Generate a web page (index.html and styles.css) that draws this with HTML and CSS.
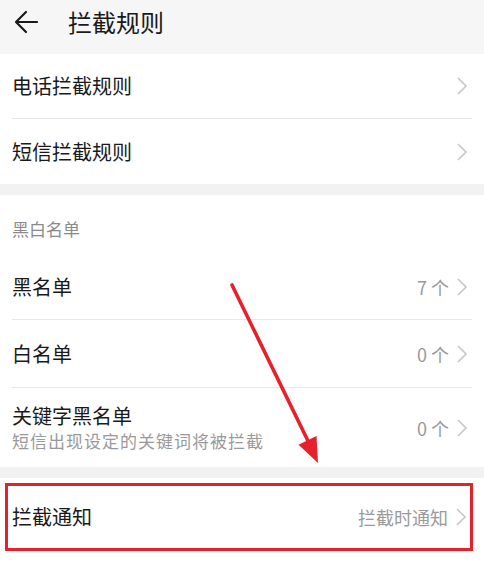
FILE: index.html
```html
<!DOCTYPE html>
<html lang="zh-CN">
<head>
  <meta charset="UTF-8">
  <title>拦截规则</title>
  <link rel="stylesheet" href="styles.css">
</head>
<body>
  <div class="page">
    <!-- Top bar -->
    <div class="topbar">
      <svg class="back" width="26" height="26" viewBox="0 0 26 26">
        <path d="M24 13H3M13 3L3 13l10 10" fill="none" stroke="#1a1a1a" stroke-width="2.2" stroke-linecap="round" stroke-linejoin="round"/>
      </svg>
      <div class="title">拦截规则</div>
    </div>

    <!-- Rules -->
    <div class="group">
      <div class="row r1">
        <div class="label">电话拦截规则</div>
        <svg class="chev" width="12" height="18" viewBox="0 0 12 18"><path d="M2 1l8 8-8 8" fill="none" stroke="#c6c6c6" stroke-width="1.6"/></svg>
      </div>
      <div class="row r2">
        <div class="label">短信拦截规则</div>
        <svg class="chev" width="12" height="18" viewBox="0 0 12 18"><path d="M2 1l8 8-8 8" fill="none" stroke="#c6c6c6" stroke-width="1.6"/></svg>
      </div>
    </div>

    <!-- Lists -->
    <div class="group">
      <div class="subhead">黑白名单</div>
      <div class="row r3">
        <div class="label">黑名单</div>
        <div class="value">7 个</div>
        <svg class="chev" width="12" height="18" viewBox="0 0 12 18"><path d="M2 1l8 8-8 8" fill="none" stroke="#c6c6c6" stroke-width="1.6"/></svg>
      </div>
      <div class="row r4">
        <div class="label">白名单</div>
        <div class="value">0 个</div>
        <svg class="chev" width="12" height="18" viewBox="0 0 12 18"><path d="M2 1l8 8-8 8" fill="none" stroke="#c6c6c6" stroke-width="1.6"/></svg>
      </div>
      <div class="row r5">
        <div class="text">
          <div class="label">关键字黑名单</div>
          <div class="desc">短信出现设定的关键词将被拦截</div>
        </div>
        <div class="value">0 个</div>
        <svg class="chev" width="12" height="18" viewBox="0 0 12 18"><path d="M2 1l8 8-8 8" fill="none" stroke="#c6c6c6" stroke-width="1.6"/></svg>
      </div>
    </div>

    <!-- Notification -->
    <div class="group last">
      <div class="highlight">
        <div class="row r6">
          <div class="label">拦截通知</div>
          <div class="value">拦截时通知</div>
          <svg class="chev" width="12" height="18" viewBox="0 0 12 18"><path d="M2 1l8 8-8 8" fill="none" stroke="#c6c6c6" stroke-width="1.6"/></svg>
        </div>
      </div>
    </div>

    <!-- Annotation arrow -->
    <svg class="arrow" width="484" height="562" viewBox="0 0 484 562">
      <line x1="232" y1="285" x2="309" y2="443" stroke="#e6212b" stroke-width="3.6" stroke-linecap="round"/>
      <polygon points="318,463 298.5,444.8 316.5,436" fill="#e6212b"/>
    </svg>
  </div>
</body>
</html>
```

FILE: styles.css
```css
body {
  margin: 0;
  background: #f2f2f2;
  font-family: "Noto Sans CJK SC", "Noto Sans", sans-serif;
  color: #1a1a1a;
}
.page {
  position: relative;
  width: 484px;
  height: 562px;
  overflow: hidden;
}
/* Top bar */
.topbar {
  height: 54px;
  background: #f6f6f6;
  display: flex;
  align-items: center;
  padding-bottom: 10px;
  box-sizing: border-box;
}
.back {
  margin-left: 13px;
}
.title {
  margin-left: 29px;
  font-size: 24px;
  line-height: 30px;
}
/* Groups */
.group {
  background: #fff;
  margin-bottom: 11px;
}
.group.last {
  margin-bottom: 0;
  height: 84px;
  padding-top: 5px;
  box-sizing: border-box;
}
.subhead {
  height: 59px;
  padding: 7px 12px 0;
  box-sizing: border-box;
  display: flex;
  align-items: center;
  font-size: 17px;
  color: #8a8a8a;
}
.row {
  margin: 0 12px;
  display: flex;
  align-items: center;
  border-bottom: 1px solid #e8e8e8;
  box-sizing: border-box;
}
.row:last-child { border-bottom: none; }
.r1 { height: 65px; }
.r2 { height: 65px; }
.r3 { height: 66px; }
.r4 { height: 68px; }
.r5 { height: 79px; }
.label {
  flex: 1;
  font-size: 20px;
  line-height: 26px;
}
.text { flex: 1; }
.text .label { flex: none; }
.desc {
  font-size: 17px;
  line-height: 24px;
  letter-spacing: 1px;
  color: #9a9a9a;
}
.value {
  font-size: 18px;
  color: #9a9a9a;
  margin-right: 7px;
}
.chev {
  margin-right: 4px;
  flex: none;
}
/* Highlighted row */
.highlight {
  margin: 0 11px 0 5px;
  border: 3px solid #e3222c;
  height: 68px;
  box-sizing: border-box;
  display: flex;
  align-items: center;
}
.highlight .row {
  flex: 1;
  margin: 0 0 0 4px;
  height: 62px;
}
.highlight .chev { margin-right: 3px; }
/* Annotation overlay */
.arrow {
  position: absolute;
  left: 0;
  top: 0;
  pointer-events: none;
}
```
